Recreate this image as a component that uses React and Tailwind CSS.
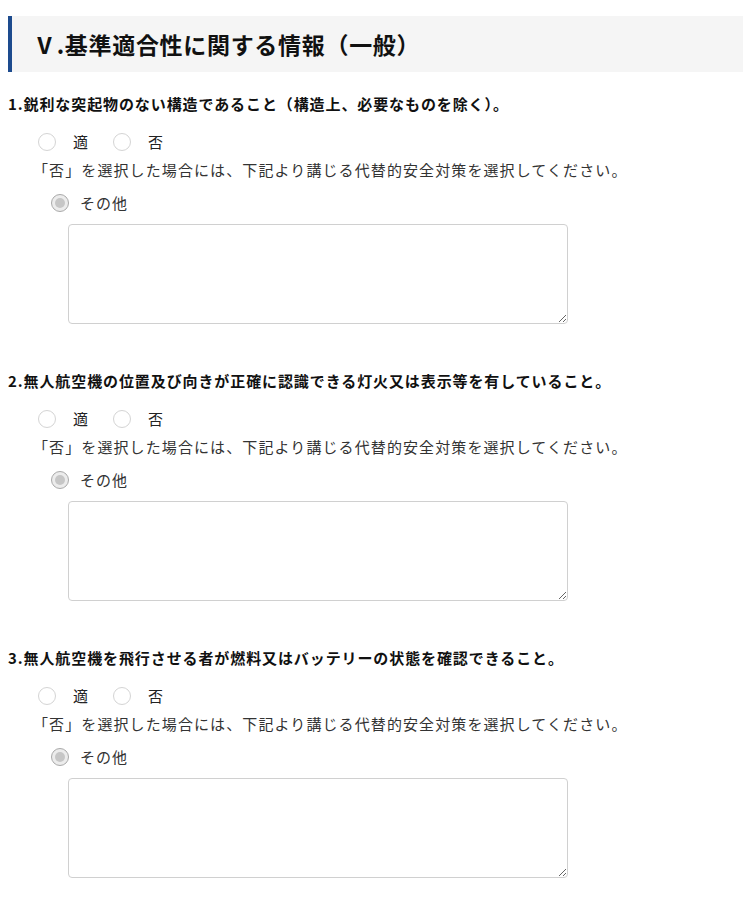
import React from 'react';

const questions = [
  { id: 1, text: '1.鋭利な突起物のない構造であること（構造上、必要なものを除く）。' },
  { id: 2, text: '2.無人航空機の位置及び向きが正確に認識できる灯火又は表示等を有していること。' },
  { id: 3, text: '3.無人航空機を飛行させる者が燃料又はバッテリーの状態を確認できること。' },
];

const font = { fontFamily: '"Noto Sans CJK JP", "Noto Sans", sans-serif' };

const Radio = () => (
  <span className="block shrink-0 w-[18px] h-[18px] rounded-full border border-[#d4d4d4] bg-white"></span>
);

const DisabledRadio = () => (
  <span className="flex shrink-0 items-center justify-center w-[18px] h-[18px] rounded-full border border-[#a9a9a9] bg-[#ececec]">
    <span className="w-[10px] h-[10px] rounded-full bg-[#c6c6c6]"></span>
  </span>
);

const Question = ({ q }) => (
  <div className="mb-[46px]">
    {/* question title */}
    <p className="h-[22px] leading-[22px] text-[15px] font-bold text-[#111] tracking-[0.06em] whitespace-nowrap">
      {q.text}
    </p>

    {/* 適 / 否 */}
    <div className="mt-[15px] h-[24px] flex items-center pl-[30px] text-[15px] text-[#222]">
      <Radio />
      <span className="ml-[17px] mr-[25px]">適</span>
      <Radio />
      <span className="ml-[17px]">否</span>
    </div>

    <p className="mt-[5px] h-[22px] leading-[22px] pl-[25px] text-[15px] text-[#333] tracking-[1.1px] whitespace-nowrap">
      「否」を選択した場合には、下記より講じる代替的安全対策を選択してください。
    </p>

    <div className="mt-[10px] h-[24px] flex items-center pl-[43px] text-[15px] text-[#333]">
      <DisabledRadio />
      <span className="ml-[11px] tracking-[1px]">その他</span>
    </div>

    <div className="mt-[9px] pl-[60px]">
      <textarea
        className="block w-[500px] h-[100px] border border-[#d0d0d0] rounded-[4px] bg-white resize-y outline-none"
        disabled
      ></textarea>
    </div>
  </div>
);

const App = () => {
  return (
    <div className="min-h-screen bg-white pt-4" style={font}>
      {/* Header */}
      <div className="ml-2 h-[56px] flex items-center border-l-4 border-[#1d4b8e] bg-[#f5f5f5] pl-[21px]">
        <h1 className="text-[23px] font-bold text-[#111] tracking-[0.03em]">Ⅴ.基準適合性に関する情報（一般）</h1>
      </div>

      <div className="px-2 pt-[21px]">
        {questions.map((q) => (
          <Question key={q.id} q={q} />
        ))}
      </div>
    </div>
  );
};

export default App;
